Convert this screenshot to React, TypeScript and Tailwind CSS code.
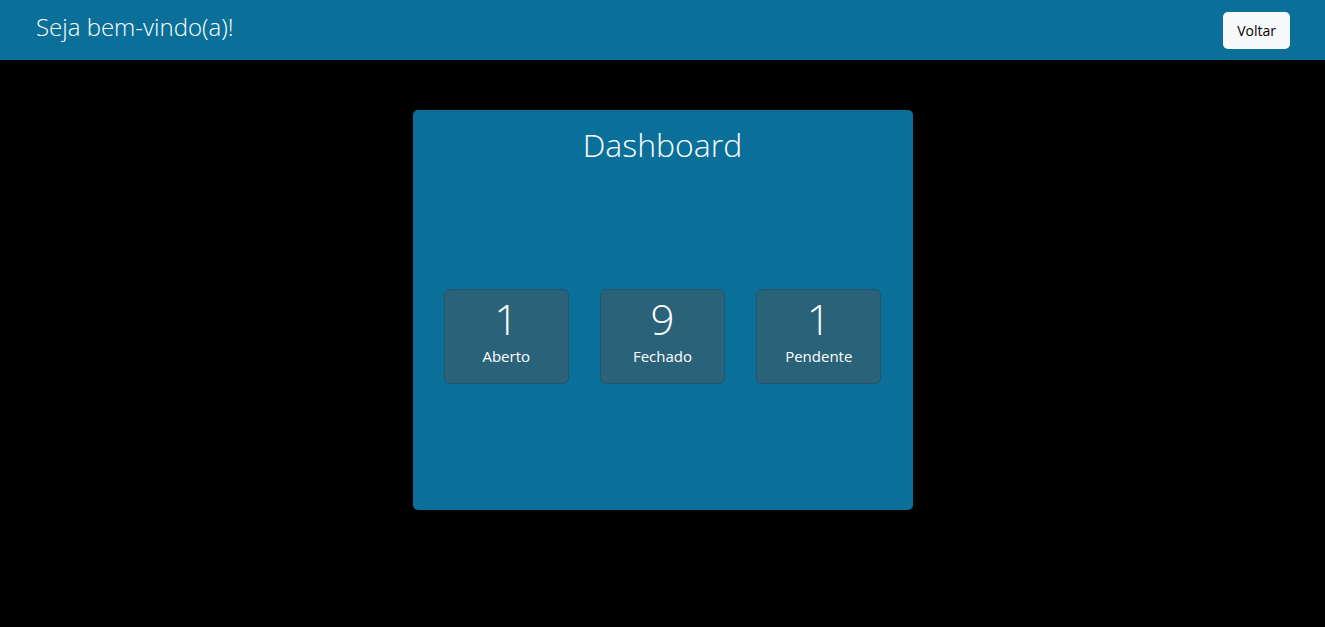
export default function App() {
  const stats = [
    { value: 1, label: 'Aberto' },
    { value: 9, label: 'Fechado' },
    { value: 1, label: 'Pendente' },
  ];

  return (
    <div className="min-h-[627px] bg-black font-['Open_Sans',sans-serif] text-white">
      <header className="flex h-[60px] items-center justify-between bg-[#0a7099] pl-[36px] pr-[35px]">
        <h1 className="-mt-[7px] text-[24px] font-light">Seja bem-vindo(a)!</h1>
        <button className="h-[37px] rounded-[5px] bg-[#f8f9fa] px-[14px] text-[14px] text-black">
          Voltar
        </button>
      </header>

      <main className="flex justify-center pt-[50px]">
        <div className="flex h-[400px] w-[500px] flex-col rounded-[5px] bg-[#0a7099]">
          <h2 className="mt-[15px] text-center text-[32px] font-light leading-[40px]">Dashboard</h2>
          <div className="mt-[124px] flex justify-evenly">
            {stats.map((s) => (
              <div
                key={s.label}
                className="flex h-[95px] w-[125px] flex-col items-center rounded-[6px] border border-[#23566d] bg-[#2a6279]"
              >
                <span className="mt-[3px] text-[42px] font-light leading-[52px]">{s.value}</span>
                <span className="mt-[1px] text-[15px] leading-[20px]">{s.label}</span>
              </div>
            ))}
          </div>
        </div>
      </main>
    </div>
  );
}
